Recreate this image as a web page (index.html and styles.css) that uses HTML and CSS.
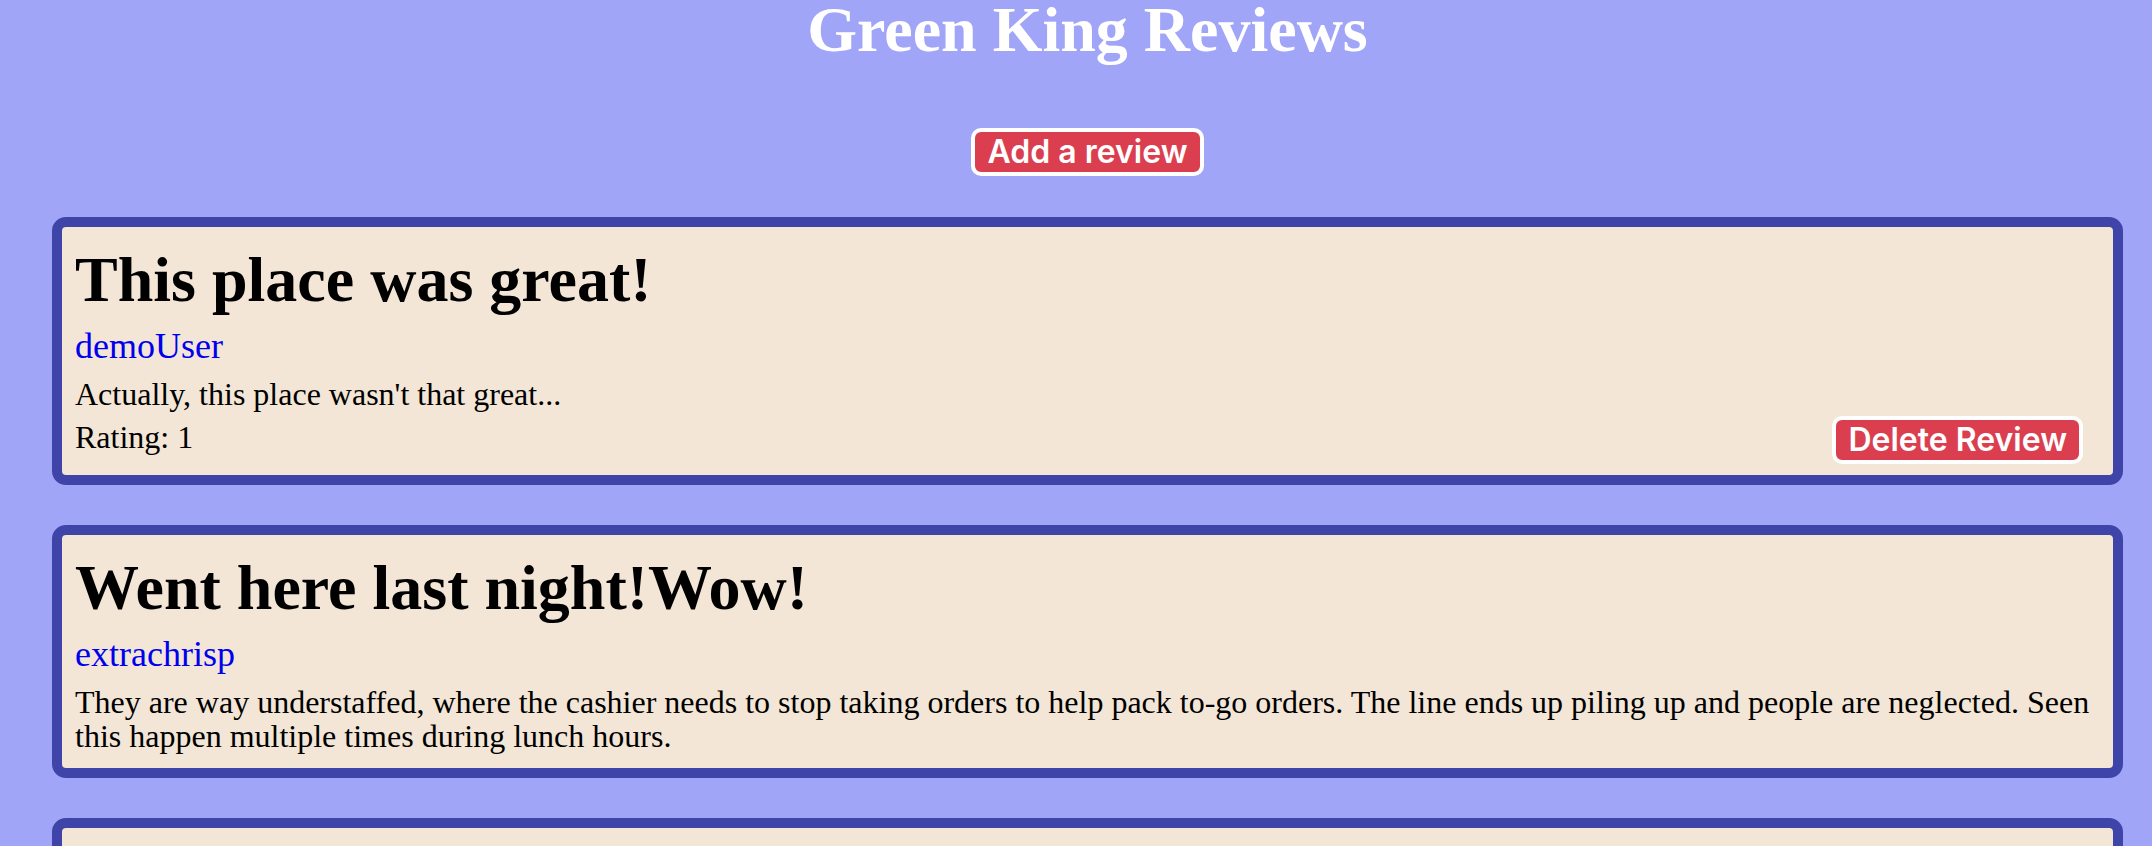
FILE: index.html
```html
<!DOCTYPE html>
<html lang="en">
<head>
<meta charset="utf-8">
<title>Green King Reviews</title>
<link rel="stylesheet" href="styles.css">
</head>
<body>
<div class="page">
  <header class="page-header">
    <h1 class="page-title">Green King Reviews</h1>
    <button class="btn" type="button">Add a review</button>
  </header>
  <main class="reviews">
    <article class="card">
      <h1 class="card-title">This place was great!</h1>
      <a class="author" href="#">demoUser</a>
      <p class="text body">Actually, this place wasn't that great...</p>
      <div class="row">
        <p class="text rating">Rating: 1</p>
        <button class="btn" type="button">Delete Review</button>
      </div>
    </article>
    <article class="card">
      <h1 class="card-title">Went here last night!Wow!</h1>
      <a class="author" href="#">extrachrisp</a>
      <p class="text body">They are way understaffed, where the cashier needs to stop taking orders to help pack to-go orders. The line ends up piling up and people are neglected. Seen this happen multiple times during lunch hours.</p>
    </article>
    <article class="card">
      <h1 class="card-title">Best burgers in town</h1>
      <a class="author" href="#">burgerfan</a>
      <p class="text body">Fresh ingredients and quick service.</p>
    </article>
  </main>
</div>
</body>
</html>
```

FILE: styles.css
```css
html, body {
  margin: 0;
  padding: 0;
}

body {
  background: #a1a5f8;
  font-family: "Liberation Serif", "Times New Roman", serif;
  color: #000;
  overflow: hidden;
}

.page {
  margin: 0 29px 0 52px;
}

.page-header {
  display: flex;
  flex-direction: column;
  align-items: center;
}

.page-title {
  margin: -7px 0 0;
  font-size: 64px;
  font-weight: bold;
  line-height: normal;
  color: #fff;
  text-align: center;
}

.btn {
  font-family: Inter, "Noto Sans", sans-serif;
  font-weight: 600;
  font-size: 32px;
  line-height: 38px;
  color: #fff;
  background: #db3e4e;
  border: 4px solid #fff;
  border-radius: 10px;
  padding: 1px 12px;
  cursor: pointer;
}

.page-header .btn {
  margin-top: 61px;
}

.reviews {
  display: flex;
  flex-direction: column;
  gap: 40px;
  margin-top: 41px;
}

.card {
  display: flex;
  flex-direction: column;
  align-items: flex-start;
  background: #f3e6d6;
  border: 10px solid #3f44a8;
  border-radius: 14px;
  padding: 15px 13px 11px;
}

.card-title {
  margin: 0;
  font-size: 64px;
  font-weight: bold;
  line-height: 76.8px;
}

.author {
  margin-top: 8px;
  font-size: 36px;
  line-height: 38px;
  color: #0000ee;
  text-decoration: none;
}

.text {
  margin: 0;
  font-size: 32px;
  line-height: 34px;
}

.body {
  margin: 12px 0 4px;
}

.row {
  align-self: stretch;
  display: flex;
  justify-content: space-between;
  align-items: flex-start;
  margin-top: 1px;
  padding-right: 17px;
}

.rating {
  margin-top: 4px;
}
```
